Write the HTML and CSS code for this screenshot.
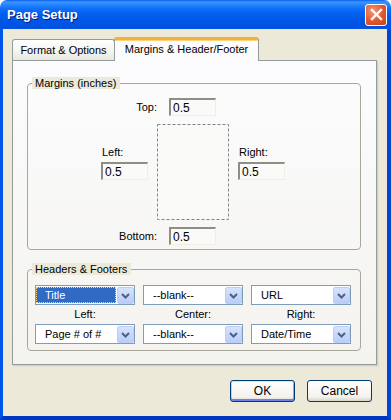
FILE: index.html
```html
<!DOCTYPE html>
<html lang="en">
<head>
  <meta charset="UTF-8" />
  <title>Page Setup</title>
  <link rel="stylesheet" href="styles.css">
</head>
<body>

  <div class="window">
    <div class="titlebar">
      <span class="title">Page Setup</span>
      <button class="close" title="Close">
        <svg width="13" height="13" viewBox="0 0 13 13">
          <path d="M2 2 L11 11 M11 2 L2 11" stroke="#fff" stroke-width="2.4" stroke-linecap="square" />
        </svg>
      </button>
    </div>

    <div class="client">
      <div class="tabs">
        <div class="tab">Format &amp; Options</div>
        <div class="tab active">Margins &amp; Header/Footer</div>
      </div>

      <div class="panel">
        <fieldset class="group">
          <legend>Margins (inches)</legend>
          <div class="margin-layout">
            <div class="edge-row">
              <label class="edge-label">Top:</label>
              <input class="edit" value="0.5">
            </div>
            <div class="mid-row">
              <div class="side">
                <label>Left:</label>
                <input class="edit" value="0.5">
              </div>
              <div class="page">
                <svg width="72" height="96">
                  <rect x="0.5" y="0.5" width="71" height="95" fill="#f9f9f7" stroke="#858585" stroke-dasharray="3 2" />
                </svg>
              </div>
              <div class="side">
                <label>Right:</label>
                <input class="edit" value="0.5">
              </div>
            </div>
            <div class="edge-row">
              <label class="edge-label">Bottom:</label>
              <input class="edit" value="0.5">
            </div>
          </div>
        </fieldset>

        <fieldset class="group headers">
          <legend>Headers &amp; Footers</legend>
          <div class="hf-grid">
            <div class="combo focused">
              <span class="value">Title</span>
              <span class="drop"><svg width="17" height="17"><path d="M5 7 L8.5 10.5 L12 7" fill="none" stroke="#4d6185" stroke-width="2" /></svg></span>
            </div>
            <div class="combo">
              <span class="value">--blank--</span>
              <span class="drop"><svg width="17" height="17"><path d="M5 7 L8.5 10.5 L12 7" fill="none" stroke="#4d6185" stroke-width="2" /></svg></span>
            </div>
            <div class="combo">
              <span class="value">URL</span>
              <span class="drop"><svg width="17" height="17"><path d="M5 7 L8.5 10.5 L12 7" fill="none" stroke="#4d6185" stroke-width="2" /></svg></span>
            </div>

            <div class="hf-label">Left:</div>
            <div class="hf-label">Center:</div>
            <div class="hf-label">Right:</div>

            <div class="combo">
              <span class="value">Page # of #</span>
              <span class="drop"><svg width="17" height="17"><path d="M5 7 L8.5 10.5 L12 7" fill="none" stroke="#4d6185" stroke-width="2" /></svg></span>
            </div>
            <div class="combo">
              <span class="value">--blank--</span>
              <span class="drop"><svg width="17" height="17"><path d="M5 7 L8.5 10.5 L12 7" fill="none" stroke="#4d6185" stroke-width="2" /></svg></span>
            </div>
            <div class="combo">
              <span class="value">Date/Time</span>
              <span class="drop"><svg width="17" height="17"><path d="M5 7 L8.5 10.5 L12 7" fill="none" stroke="#4d6185" stroke-width="2" /></svg></span>
            </div>
          </div>
        </fieldset>
      </div>

      <div class="actions">
        <button class="btn default">OK</button>
        <button class="btn">Cancel</button>
      </div>
    </div>
  </div>

</body>
</html>
```
FILE: styles.css
```css
body {
  margin: 0;
  background: #ffffff;
  font-family: "Liberation Sans", Arial, sans-serif;
  font-size: 11px;
  color: #000;
}

.window {
  width: 391px;
  height: 420px;
  display: flex;
  flex-direction: column;
  border-radius: 7px 7px 0 0;
  overflow: hidden;
}

.titlebar {
  height: 29px;
  flex: none;
  display: flex;
  align-items: center;
  justify-content: space-between;
  padding: 0 4px 0 7px;
  background: linear-gradient(to bottom,
    #0a5ff0 0px, #3d95ff 2px, #2b8aff 4px, #1272fb 8px,
    #0462f0 13px, #0058e8 19px, #0054e3 25px, #0050dc 28px, #0a5ee8 29px);
}

.title {
  color: #fff;
  font-weight: bold;
  font-size: 13px;
  text-shadow: 1px 1px 0 #0a1a80;
}

.close {
  width: 22px;
  height: 22px;
  padding: 0;
  border: 1px solid #fff;
  border-radius: 3px;
  background: radial-gradient(circle at 35% 30%, #f0967a 0%, #e2562b 55%, #c8401b 100%);
  display: flex;
  align-items: center;
  justify-content: center;
}

.client {
  flex: 1;
  background: #ece9d8;
  border-style: solid;
  border-width: 0 4px 4px 3px;
  border-color: #0055ea #0046d8 #0037c0 #0055ea;
  padding: 8px 10px 0 9px;
}

/* tabs */

.tabs {
  display: flex;
  align-items: flex-end;
  height: 23px;
  position: relative;
  z-index: 1;
}

.tab {
  box-sizing: border-box;
  height: 21px;
  width: 103px;
  border: 1px solid #919b9c;
  border-bottom: none;
  border-radius: 3px 3px 0 0;
  background: linear-gradient(#ffffff, #f3f3ef 60%, #e8e7e0);
  text-align: center;
  line-height: 19px;
  padding-top: 1px;
}

.tab.active {
  width: 145px;
  height: 24px;
  margin-left: -1px;
  margin-bottom: -1px;
  border-top: 3px solid #f4ae3d;
  box-shadow: inset 0 1px 0 #ffd57a;
  background: #fcfcfe;
  line-height: 16px;
  padding-top: 1px;
}

.panel {
  border: 1px solid #919b9c;
  box-shadow: 1px 1px 0 #d6d2c2, 2px 2px 0 #e2dfd0;
  background: linear-gradient(#fcfcfe, #f4f3ee);
  padding: 16px 15px 13px 14px;
}

/* group boxes */

.group {
  margin: 0;
  padding: 0;
  border: 1px solid #a9a799;
  border-radius: 4px;
  min-width: 0;
}

.group legend {
  margin-left: 4px;
  padding: 0 4px 0 3px;
  background: #ece9d8;
  line-height: 12px;
}

.headers {
  margin-top: 13px;
}

.margin-layout {
  margin-left: 73px;
  padding: 9px 0 4px 0;
}

.edge-row {
  display: flex;
  align-items: center;
  height: 18px;
}

.edge-label {
  width: 56px;
  padding-right: 12px;
  text-align: right;
}

.mid-row {
  display: flex;
  gap: 9px;
  margin: 8px 0 7px;
  height: 96px;
}

.side {
  width: 47px;
  display: flex;
  flex-direction: column;
  gap: 3px;
  padding-top: 22px;
}

.side label {
  line-height: 13px;
  padding-left: 1px;
}

.page svg {
  display: block;
}

.edit {
  box-sizing: border-box;
  width: 47px;
  height: 18px;
  margin: 0;
  padding: 0 0 0 2px;
  border-style: solid;
  border-width: 2px 1px 1px 2px;
  border-color: #8f8e84 #f1efe2 #f1efe2 #8f8e84;
  background: #fafaf8;
  font: inherit;
  font-size: 12px;
  color: #000;
}

/* header / footer combos */

.hf-grid {
  display: grid;
  grid-template-columns: repeat(3, 100px);
  grid-template-rows: 20px 19px 20px;
  column-gap: 8px;
  margin-left: 7px;
  padding: 10px 0 6px;
}

.hf-label {
  text-align: center;
  line-height: 19px;
}

.combo {
  box-sizing: border-box;
  display: flex;
  align-items: center;
  border: 1px solid #7f9db9;
  background: #fff;
  height: 20px;
}

.combo .value {
  flex: 1;
  align-self: stretch;
  margin: 1px 1px 1px 0;
  padding-left: 9px;
  line-height: 16px;
}

.combo.focused .value {
  background: #316ac5;
  color: #fff;
  outline: 1px dotted #f1d98b;
  outline-offset: -1px;
}

.drop {
  width: 17px;
  height: 17px;
  box-sizing: border-box;
  border: 1px solid #bccdf7;
  border-radius: 2px;
  background: linear-gradient(#d7e3fd, #b9cdf9);
}

.drop svg {
  display: block;
  margin: -1px;
}

/* dialog buttons */

.actions {
  display: flex;
  justify-content: flex-end;
  gap: 12px;
  margin: 15px 5px 0 0;
}

.btn {
  width: 65px;
  height: 22px;
  border: 1px solid #003c74;
  border-radius: 3px;
  background: linear-gradient(#ffffff, #f3f2ed 80%, #d8d3c8);
  font: inherit;
  font-size: 12px;
  color: #000;
  padding: 0;
}

.btn.default {
  box-shadow: inset 0 1px 0 #cee7ff, inset 0 -2px 0 #6982ee, inset 1px 0 0 #b9d1f6, inset -1px 0 0 #88a9e8;
}
```
